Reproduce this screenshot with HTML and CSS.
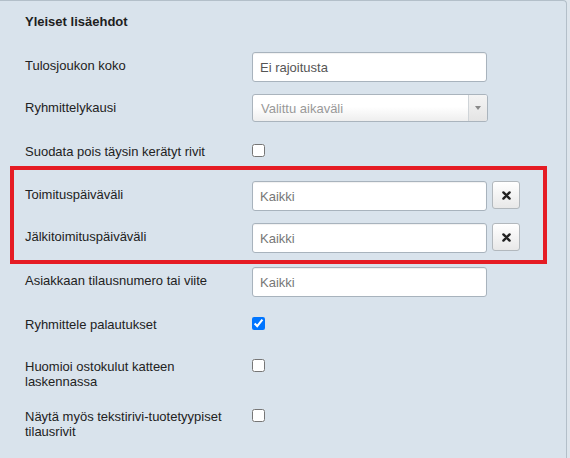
FILE: index.html
```html
<!DOCTYPE html>
<html lang="fi">
<head>
<meta charset="utf-8">
<title>Yleiset lisäehdot</title>
<link rel="stylesheet" href="styles.css">
</head>
<body>
<div class="panel">
  <div class="title">Yleiset lisäehdot</div>
  <div class="rows">
    <div class="row">
      <div class="label">Tulosjoukon koko</div>
      <input class="text dark" type="text" placeholder="Ei rajoitusta">
    </div>
    <div class="row">
      <div class="label">Ryhmittelykausi</div>
      <div class="select"><span class="select-text">Valittu aikaväli</span><span class="select-arrow"><span class="tri"></span></span></div>
    </div>
    <div class="row row-check row-gap-big">
      <div class="label">Suodata pois täysin kerätyt rivit</div>
      <input class="check" type="checkbox">
    </div>
    <div class="row">
      <div class="label">Toimituspäiväväli</div>
      <input class="text" type="text" placeholder="Kaikki">
      <button class="clear" type="button"><svg width="9" height="9" viewBox="0 0 9 9"><path d="M1.4 1.4L7.6 7.6M7.6 1.4L1.4 7.6" stroke="#222" stroke-width="2.4" stroke-linecap="round"/></svg></button>
    </div>
    <div class="row row-gap-mid">
      <div class="label">Jälkitoimituspäiväväli</div>
      <input class="text" type="text" placeholder="Kaikki">
      <button class="clear" type="button"><svg width="9" height="9" viewBox="0 0 9 9"><path d="M1.4 1.4L7.6 7.6M7.6 1.4L1.4 7.6" stroke="#222" stroke-width="2.4" stroke-linecap="round"/></svg></button>
    </div>
    <div class="row">
      <div class="label">Asiakkaan tilausnumero tai viite</div>
      <input class="text" type="text" placeholder="Kaikki">
    </div>
    <div class="row row-check">
      <div class="label">Ryhmittele palautukset</div>
      <input class="check" type="checkbox" checked>
    </div>
    <div class="row row-check">
      <div class="label">Huomioi ostokulut katteen laskennassa</div>
      <input class="check" type="checkbox">
    </div>
    <div class="row row-check">
      <div class="label">Näytä myös tekstirivi-tuotetyypiset tilausrivit</div>
      <input class="check" type="checkbox">
    </div>
  </div>
  <div class="highlight"></div>
</div>
</body>
</html>
```

FILE: styles.css
```css
html, body {
  margin: 0;
  padding: 0;
  background: #dde5ec;
  font-family: "Liberation Sans", Arial, sans-serif;
  font-size: 13px;
  color: #222;
}

.panel {
  position: relative;
  width: 567px;
  height: 470px;
  background: #d9e3ec;
  border-top: 1px solid #b3bfc9;
  border-right: 1px solid #b3bfc9;
  border-top-right-radius: 4px;
  box-sizing: border-box;
  padding: 13px 0 0 25px;
}

.title {
  font-weight: bold;
  line-height: 15px;
  color: #1e1e1e;
}

.rows {
  margin-top: 23px;
  display: flex;
  flex-direction: column;
}

.row {
  display: flex;
  align-items: flex-start;
  min-height: 30px;
  margin-bottom: 12px;
}

.row-gap-big { margin-bottom: 15px; }
.row-gap-mid { margin-bottom: 14px; }

.label {
  width: 220px;
  margin-right: 7px;
  padding-top: 6px;
  line-height: 15px;
  color: #222;
}

.row-check .label { padding-top: 8px; }

.text {
  box-sizing: border-box;
  width: 235px;
  height: 30px;
  margin: 0;
  padding: 0 7px;
  border: 1px solid #a8b3bd;
  border-radius: 3px;
  background: #fff;
  font-family: "Liberation Sans", Arial, sans-serif;
  font-size: 13px;
  color: #333;
  box-shadow: inset 0 1px 1px rgba(0, 0, 0, 0.06);
  outline: none;
}

.text::placeholder { color: #777; }
.text.dark::placeholder { color: #555; }

.select {
  box-sizing: border-box;
  width: 236px;
  height: 28px;
  display: flex;
  align-items: stretch;
  border: 1px solid #aab4bd;
  border-radius: 3px;
  background: linear-gradient(#ffffff 0%, #ffffff 45%, #eeeeee 100%);
}

.select-text {
  flex: 1;
  display: flex;
  align-items: center;
  padding-left: 8px;
  color: #999;
}

.select-arrow {
  width: 18px;
  border-left: 1px solid #cfd4d8;
  display: flex;
  align-items: center;
  justify-content: center;
  background: linear-gradient(#f4f4f4, #e4e4e4);
  border-radius: 0 2px 2px 0;
}

.tri {
  width: 0;
  height: 0;
  border-left: 3px solid transparent;
  border-right: 3px solid transparent;
  border-top: 4px solid #888;
}

.clear {
  box-sizing: border-box;
  width: 28px;
  height: 28px;
  margin: 0 0 0 5px;
  padding: 0;
  border: 1px solid #b2b8bd;
  border-radius: 3px;
  background: linear-gradient(#ffffff, #e8e8e8);
  display: flex;
  align-items: center;
  justify-content: center;
}

.check {
  width: 13px;
  height: 13px;
  margin: 8px 0 0 0;
}

.highlight {
  position: absolute;
  left: 10px;
  top: 165px;
  width: 537px;
  height: 98px;
  box-sizing: border-box;
  border: 4px solid #e51c24;
  pointer-events: none;
}
```
